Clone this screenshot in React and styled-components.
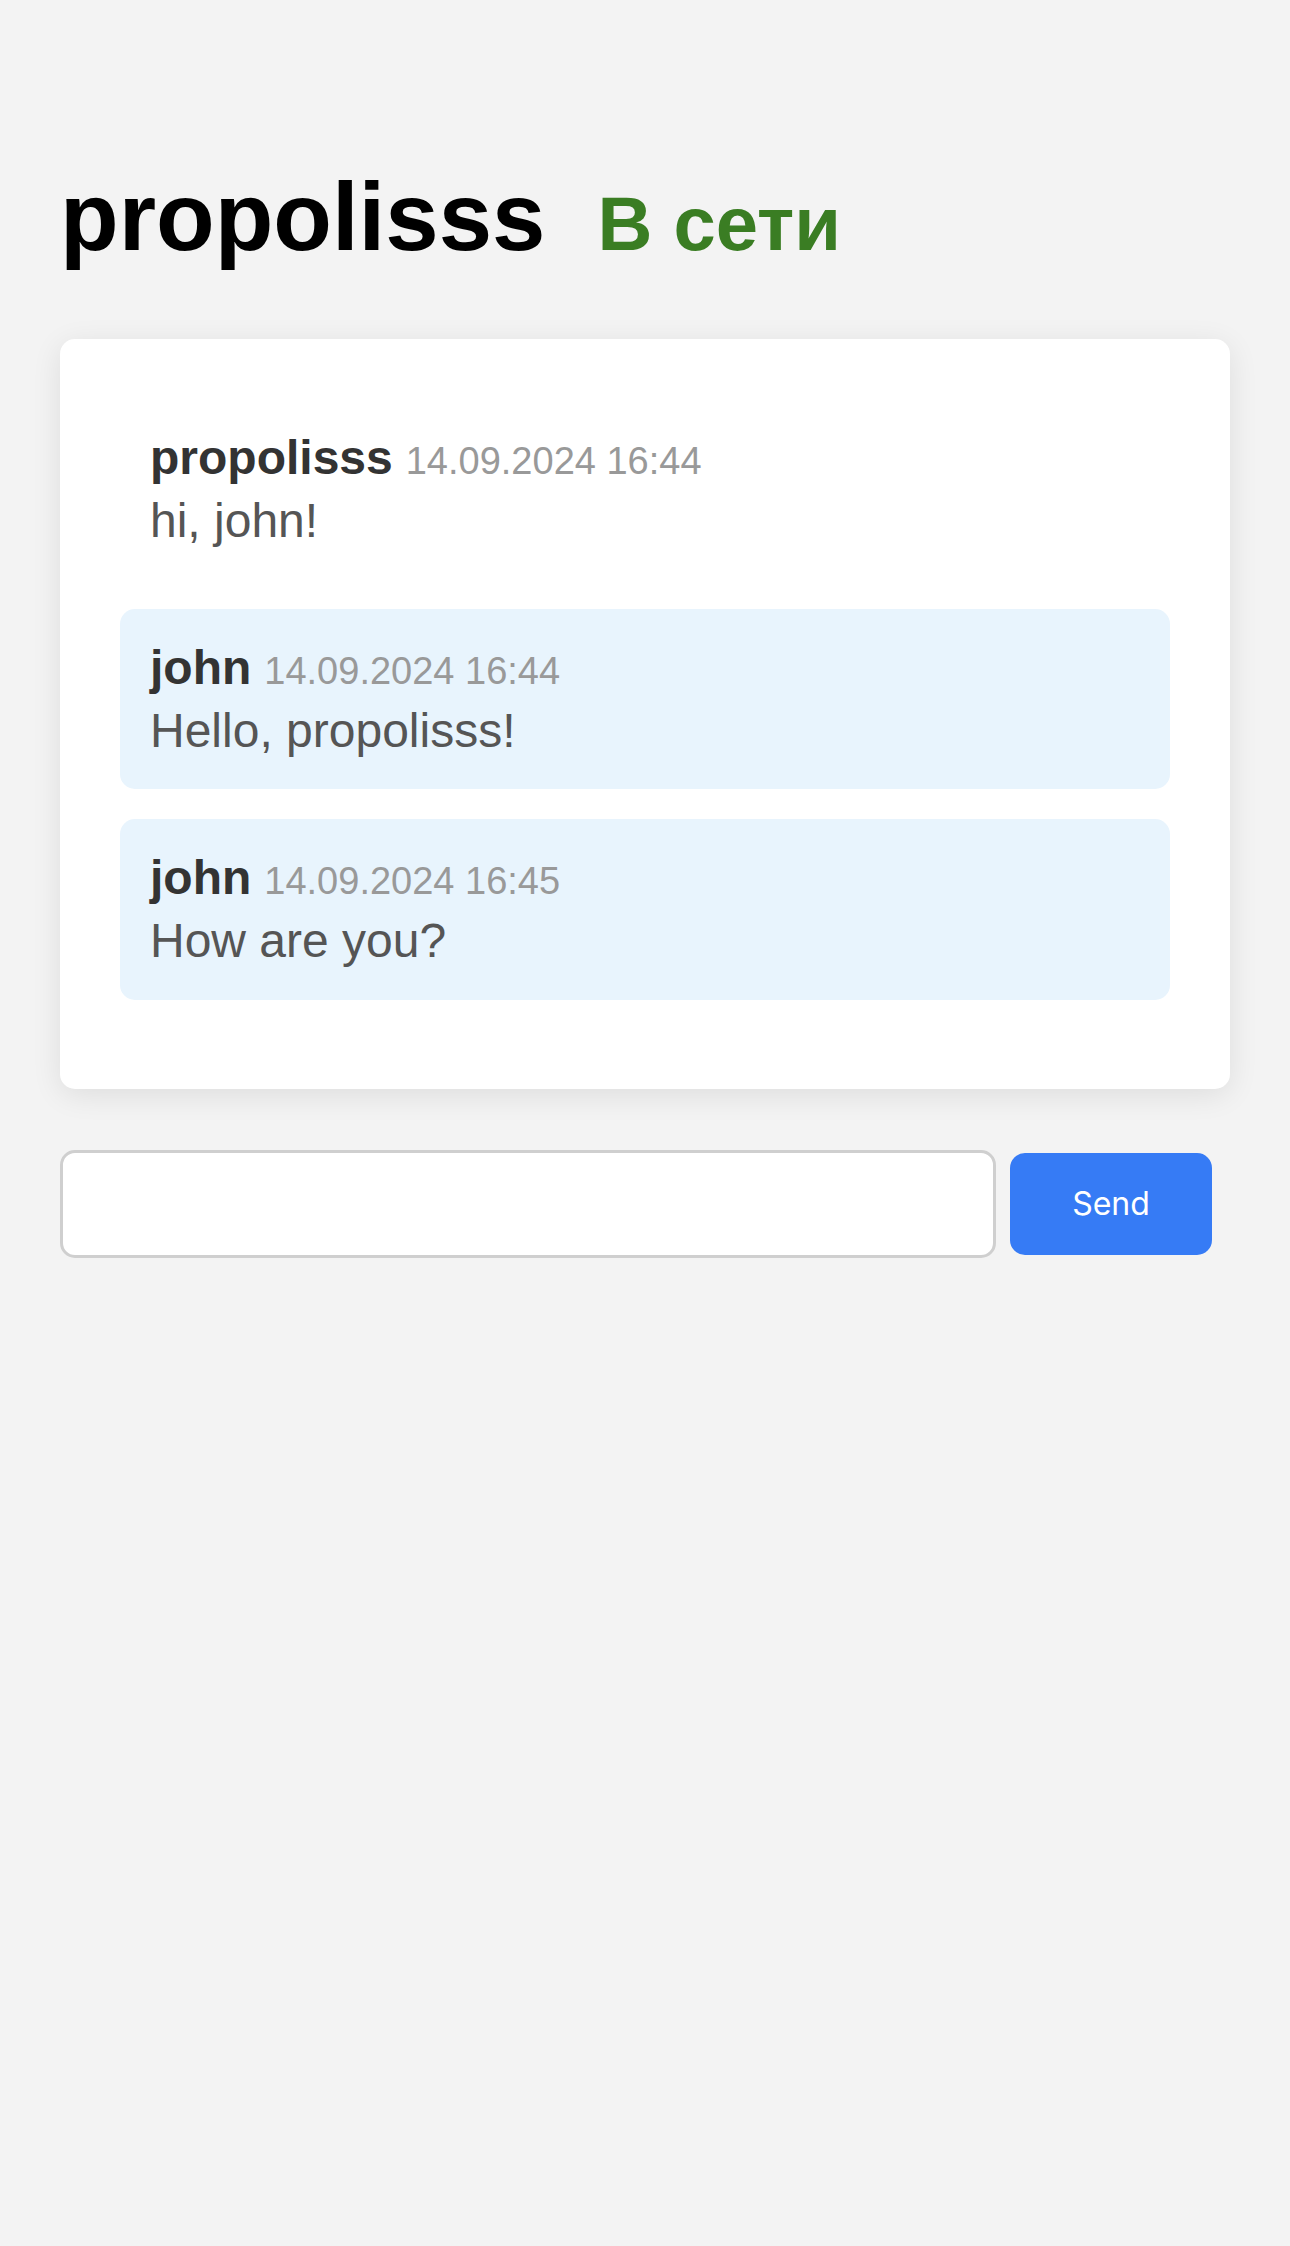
import React from "react";
import styled, { createGlobalStyle } from "styled-components";

const GlobalStyle = createGlobalStyle`
  html, body {
    margin: 0;
    padding: 0;
    background: #f3f3f3;
  }
  body {
    font-family: "Liberation Sans", Arial, sans-serif;
  }
`;

const Page = styled.div`
  min-height: 2246px;
  box-sizing: border-box;
  padding: 162px 60px 0;
  background: #f3f3f3;
`;

const Header = styled.div`
  display: flex;
  align-items: baseline;
  gap: 52px;
  margin-bottom: 67px;
`;

const Title = styled.h1`
  margin: 0;
  font-size: 96px;
  font-weight: bold;
  line-height: normal;
  color: #000;
`;

const Status = styled.h2`
  margin: 0;
  font-size: 76px;
  font-weight: bold;
  line-height: normal;
  color: #3a7d23;
`;

const ChatBox = styled.div`
  background: #fff;
  border-radius: 15px;
  padding: 60px 60px 59px;
  box-shadow: 0 6px 30px rgba(0, 0, 0, 0.09);
`;

const Message = styled.div`
  padding: 30px;
  margin-bottom: 30px;
  border-radius: 15px;
  background: ${(p) => (p.own ? "transparent" : "#e8f4fd")};
  line-height: 1.2;
`;

const Author = styled.span`
  font-size: 48px;
  font-weight: bold;
  color: #333;
`;

const Time = styled.span`
  margin-left: 13px;
  font-size: 38px;
  color: #999;
`;

const Text = styled.div`
  margin-top: 5px;
  font-size: 48px;
  color: #555;
`;

const InputRow = styled.div`
  display: flex;
  align-items: center;
  gap: 14px;
  margin-top: 61px;
`;

const Input = styled.input`
  width: 80%;
  height: 108px;
  box-sizing: border-box;
  border: 3px solid #cfcfcf;
  border-radius: 15px;
  background: #fff;
  padding: 0 24px;
  font-size: 40px;
  outline: none;
`;

const SendButton = styled.button`
  width: 202px;
  height: 102px;
  border: none;
  border-radius: 15px;
  background: #367bf5;
  color: #fff;
  font-family: Inter, "Noto Sans", sans-serif;
  font-size: 32px;
  cursor: pointer;
`;

const messages = [
  { id: 1, author: "propolisss", time: "14.09.2024 16:44", text: "hi, john!", own: true },
  { id: 2, author: "john", time: "14.09.2024 16:44", text: "Hello, propolisss!" },
  { id: 3, author: "john", time: "14.09.2024 16:45", text: "How are you?" },
];

export default function App() {
  return (
    <>
      <GlobalStyle />
      <Page>
        <Header>
          <Title>propolisss</Title>
          <Status>В сети</Status>
        </Header>
        <ChatBox>
          {messages.map((m) => (
            <Message key={m.id} own={m.own}>
              <div>
                <Author>{m.author}</Author>
                <Time>{m.time}</Time>
              </div>
              <Text>{m.text}</Text>
            </Message>
          ))}
        </ChatBox>
        <InputRow>
          <Input type="text" />
          <SendButton>Send</SendButton>
        </InputRow>
      </Page>
    </>
  );
}
